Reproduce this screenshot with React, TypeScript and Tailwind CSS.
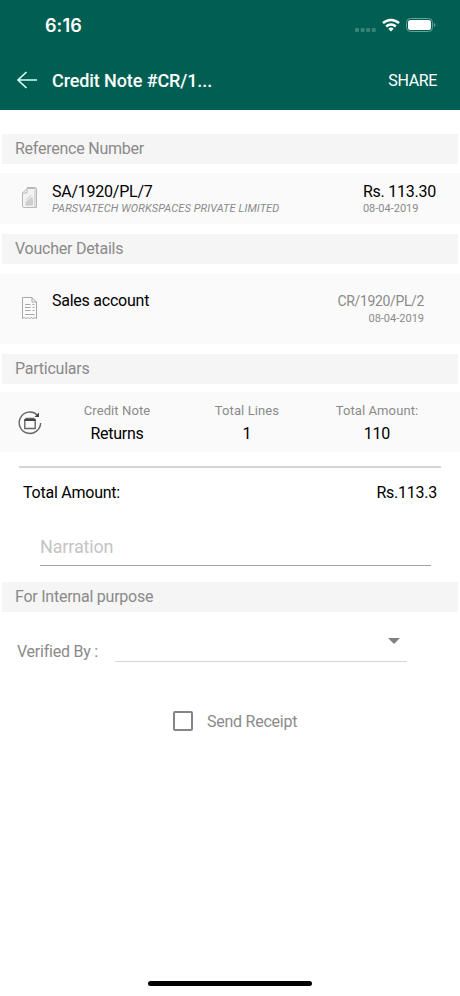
import React from 'react';

const FileIcon = () => (
  <svg className="w-[17px] h-[24px]" viewBox="0 0 17 24" fill="none" stroke="#b8b8b8" strokeWidth="1">
    <path d="M6 1.500h8q1.500 0 1.500 1.500v18.500h-2v-18" fill="#dedede" />
    <path d="M13.500 2.500H6L1.500 7v13q0 1.500 1.500 1.500h10.500" fill="#f3f3f3" />
    <path d="M6 2.500V7H1.500" />
    <path d="M4.500 19v-3l6-5 1.500 1v7z" fill="#cfcfcf" stroke="none" />
    <path d="M5.500 13.500l5-4.500M4.500 19h7.500" stroke="#c4c4c4" />
  </svg>
);

const ReceiptIcon = () => (
  <svg className="w-[17px] h-[24px]" viewBox="0 0 17 24" fill="none" stroke="#a8a8a8" strokeWidth="1">
    <path d="M1.500 22.500v-21h9.500l4.500 4.500v16.500l-1.750-1-1.750 1-1.750-1-1.750 1-1.750-1-1.750 1-1.750-1z" />
    <path d="M11 1.500V6h4.500" />
    <path d="M4 8.500h5.500M11.500 8.500h2M4 11.500h5.500M11.500 11.500h2M4 14.500h5.500M11.500 14.500h2M4 18.500h9.500" />
  </svg>
);

const ReturnIcon = () => (
  <svg className="w-[24px] h-[24px]" viewBox="0 0 24 24" fill="none" stroke="#666" strokeWidth="1.400">
    <path d="M19.500 4.200A10.700 10.700 0 1 0 22.600 12" />
    <path d="M21 1.500v4.500h-4.500z" fill="#444" stroke="none" />
    <path d="M6.800 9h10.400v8.500H6.800zM6.800 9l1.500-1.500h7.400L17.200 9" />
    <path d="M6.500 9h11" stroke="#444" strokeWidth="2" />
  </svg>
);

const SectionTitle = ({ children }: { children: React.ReactNode }) => (
  <h2 className="mx-[2px] h-[30px] shrink-0 bg-[#f5f5f5] pl-[13px] text-[16px] leading-[29px] tracking-[-0.24px] text-[#8a8a8a]">
    {children}
  </h2>
);

const Column = ({ label, value }: { label: string; value: string }) => (
  <div className="w-[130px] text-center">
    <div className="text-[13px] leading-[18px] tracking-[0.1px] text-[#8a8a8a]">{label}</div>
    <div className="mt-[4px] text-[16px] leading-[20px] tracking-[-0.24px] text-black">{value}</div>
  </div>
);

const App = () => {
  return (
    <div className="flex h-[996px] w-[460px] flex-col overflow-hidden bg-white font-['Roboto',sans-serif]">
      {/* Header */}
      <header className="h-[110px] shrink-0 bg-[#005f52] text-white">
        <div className="flex h-[50px] items-center pl-[45px] pr-[24px]">
          <span className="mt-[2px] font-['Inter',sans-serif] text-[18px] leading-[20px] font-semibold tracking-[0.1px]">6:16</span>
          <svg className="ml-auto mr-[6px] h-[4px] w-[21px] mt-[10px]" viewBox="0 0 21 4" fill="#3a8277">
            <rect x="0" width="4" height="4" rx="1" />
            <rect x="5.600" width="4" height="4" rx="1" />
            <rect x="11.200" width="4" height="4" rx="1" />
            <rect x="16.800" width="4" height="4" rx="1" />
          </svg>
          <svg className="mr-[6px] h-[14px] w-[18px]" viewBox="0 0 18 14" fill="none" stroke="#fff" strokeWidth="2.500">
            <path d="M1 5.200a11.500 11.500 0 0 1 16 0" />
            <path d="M4.200 8.500a7 7 0 0 1 9.600 0" />
            <path d="M9 13.500L6.300 10.800a4 4 0 0 1 5.400 0z" fill="#fff" stroke="none" />
          </svg>
          <svg className="h-[14px] w-[30px]" viewBox="0 0 30 14" fill="none">
            <rect x="0.500" y="0.500" width="26" height="13" rx="4" stroke="#67a197" />
            <rect x="2" y="2" width="23" height="10" rx="2.500" fill="#fff" />
            <path d="M28 4.800v4.400c1.800-.8 1.800-3.600 0-4.400z" fill="#67a197" />
          </svg>
        </div>
        <div className="flex h-[60px] items-center pl-[17px] pr-[23px]">
          <svg className="h-[18px] w-[20px]" viewBox="0 0 20 18" fill="none" stroke="#d5fff7" strokeWidth="1.600">
            <path d="M20 9H1M9.500 1L1 9l8.500 8" />
          </svg>
          <h1 className="ml-[15px] text-[18px] font-medium tracking-[-0.1px]">Credit Note #CR/1...</h1>
          <button className="mt-px ml-auto text-[16px] tracking-[-0.35px]">SHARE</button>
        </div>
      </header>

      <main className="flex flex-col pt-[24px]">
        <SectionTitle>Reference Number</SectionTitle>
        <div className="mt-[9px] flex h-[51px] bg-[#fafafa] pl-[21px] pr-[24px]">
          <div className="pt-[13px]"><FileIcon /></div>
          <div className="ml-[14px] pt-[9px]">
            <div className="text-[16px] leading-[20px] tracking-[-0.24px] text-black">SA/1920/PL/7</div>
            <div className="text-[11px] leading-[13px] tracking-[0.1px] text-[#8a8a8a] italic">PARSVATECH WORKSPACES PRIVATE LIMITED</div>
          </div>
          <div className="ml-auto pt-[9px]">
            <div className="text-[16px] leading-[20px] tracking-[-0.24px] text-black">Rs. 113.30</div>
            <div className="text-[11px] leading-[13px] text-[#8a8a8a]">08-04-2019</div>
          </div>
        </div>

        <div className="mt-[10px] flex flex-col">
          <SectionTitle>Voucher Details</SectionTitle>
        </div>
        <div className="mt-[10px] flex h-[70px] bg-[#fafafa] pl-[21px] pr-[36px]">
          <div className="pt-[22px]"><ReceiptIcon /></div>
          <div className="ml-[14px] pt-[17px] text-[16px] leading-[20px] tracking-[-0.24px] text-black">Sales account</div>
          <div className="ml-auto pt-[18px] text-right text-[#8a8a8a]">
            <div className="text-[14px] leading-[18px] tracking-[-0.36px]">CR/1920/PL/2</div>
            <div className="text-[11px] leading-[17px]">08-04-2019</div>
          </div>
        </div>

        <div className="mt-[10px] flex flex-col">
          <SectionTitle>Particulars</SectionTitle>
        </div>
        <div className="mt-[8px] flex h-[60px] bg-[#fafafa] pl-[18px]">
          <div className="pt-[19px]"><ReturnIcon /></div>
          <div className="ml-[10px] flex pt-[10px]">
            <Column label="Credit Note" value="Returns" />
            <Column label="Total Lines" value="1" />
            <Column label="Total Amount:" value="110" />
          </div>
        </div>

        <div className="mt-[14px] ml-[19px] mr-[19px] flex h-[52px] items-center justify-between border-t-2 border-[#d4d4d4] pl-[4px] pr-[4px] text-[16px] tracking-[-0.24px] text-black">
          <span>Total Amount:</span>
          <span>Rs.113.3</span>
        </div>

        <div className="mt-[8px] ml-[40px] mr-[29px] h-[40px] border-b border-[#a3a3a3] text-[18px] leading-[42px] tracking-[-0.15px] text-[#c4c4c4]">
          Narration
        </div>

        <div className="mt-[16px] flex flex-col">
          <SectionTitle>For Internal purpose</SectionTitle>
        </div>
        <div className="mt-[22px] flex h-[28px] pl-[17px]">
          <span className="w-[98px] text-[16px] leading-[36px] tracking-[-0.24px] text-[#8a8a8a]">Verified By :</span>
          <div className="flex w-[292px] justify-end border-b border-[#d4d4d4] pr-[7px] pt-[4px]">
            <svg className="h-[6px] w-[12px]" viewBox="0 0 12 6" fill="#808080">
              <path d="M0 0h12L6 6z" />
            </svg>
          </div>
        </div>

        <label className="mt-[49px] flex items-start pl-[173px] text-[16px] leading-[20px] tracking-[-0.24px] text-[#8a8a8a]">
          <span className="mr-[14px] h-[20px] w-[20px] rounded-[2px] border-2 border-[#858585]" />
          <span className="pt-px">Send Receipt</span>
        </label>
      </main>

      <div className="mt-auto mb-[10px] h-[5px] w-[164px] self-center rounded-full bg-black" />
    </div>
  );
};

export default App;
